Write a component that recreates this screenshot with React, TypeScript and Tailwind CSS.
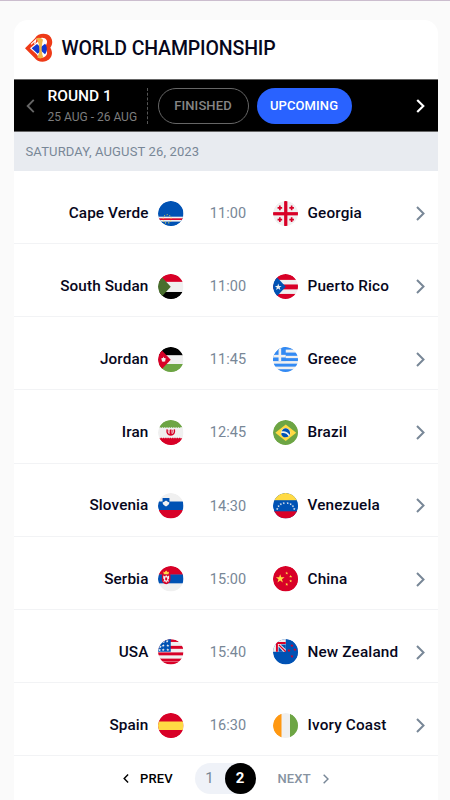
import type { ReactNode } from "react";

type Match = { home: string; away: string; time: string };

const MATCHES: Match[] = [
  { home: "Cape Verde", away: "Georgia", time: "11:00" },
  { home: "South Sudan", away: "Puerto Rico", time: "11:00" },
  { home: "Jordan", away: "Greece", time: "11:45" },
  { home: "Iran", away: "Brazil", time: "12:45" },
  { home: "Slovenia", away: "Venezuela", time: "14:30" },
  { home: "Serbia", away: "China", time: "15:00" },
  { home: "USA", away: "New Zealand", time: "15:40" },
  { home: "Spain", away: "Ivory Coast", time: "16:30" },
];

const RED = "#d80027";
const BLUE = "#0052b4";
const GREEN = "#6da544";
const WHITE = "#f0f0f0";
const YELLOW = "#ffda44";

const Rect = ({ x = 0, y = 0, w = 78, h = 78, c }: { x?: number; y?: number; w?: number; h?: number; c: string }) => (
  <rect x={x} y={y} width={w} height={h} fill={c} />
);

function starPoints(cx: number, cy: number, r: number) {
  return Array.from({ length: 10 }, (_, i) => {
    const a = (Math.PI / 5) * i - Math.PI / 2;
    const d = i % 2 ? r * 0.4 : r;
    return `${(cx + d * Math.cos(a)).toFixed(2)},${(cy + d * Math.sin(a)).toFixed(2)}`;
  }).join(" ");
}

const Star = ({ x, y, r, c }: { x: number; y: number; r: number; c: string }) => <polygon points={starPoints(x, y, r)} fill={c} />;

// 78x78 canvas, clipped to a circle by Flag
const FLAGS: Record<string, ReactNode> = {
  "Cape Verde": (
    <>
      <Rect c={BLUE} />
      <Rect y={48} h={15} c={WHITE} />
      <Rect y={53} h={5} c={RED} />
      {[[28, 42], [20, 45], [36, 45], [16, 52], [40, 52], [17, 61], [39, 61], [23, 67], [33, 67]].map(([x, y]) => (
        <Star key={`${x}-${y}`} x={x} y={y} r={3} c={YELLOW} />
      ))}
    </>
  ),
  Georgia: (
    <>
      <Rect c={WHITE} />
      <Rect x={34} w={10} c={RED} />
      <Rect y={34} h={10} c={RED} />
      {[[21, 21], [57, 21], [21, 57], [57, 57]].map(([x, y]) => (
        <path key={`${x}-${y}`} d={`M${x - 7} ${y}h14M${x} ${y - 7}v14`} stroke={RED} strokeWidth={5} />
      ))}
    </>
  ),
  "South Sudan": (
    <>
      <Rect c={WHITE} />
      <Rect h={24} c={RED} />
      <Rect y={55} h={23} c="#000" />
      <path d="M0 0L13 11L39 39L13 67L0 78Z" fill="#496e2d" />
    </>
  ),
  "Puerto Rico": (
    <>
      <Rect c={WHITE} />
      <Rect h={18} c={RED} />
      <Rect y={32} h={15} c={RED} />
      <Rect y={61} h={17} c={RED} />
      <path d="M0 0L10 8L39 39L10 70L0 78Z" fill={BLUE} />
      <Star x={16} y={40} r={11} c={WHITE} />
    </>
  ),
  Jordan: (
    <>
      <Rect c={WHITE} />
      <Rect h={25} c="#000" />
      <Rect y={52} h={26} c={GREEN} />
      <path d="M0 0L12 11L39 39L12 67L0 78Z" fill={RED} />
      <Star x={17} y={38} r={9} c={WHITE} />
      <circle cx={17} cy={39} r={6} fill={WHITE} />
    </>
  ),
  Greece: (
    <>
      <Rect c={WHITE} />
      <Rect h={8} c="#338af3" />
      <Rect y={17} h={10} c="#338af3" />
      <Rect y={34} h={9} c="#338af3" />
      <Rect y={51} h={9} c="#338af3" />
      <Rect y={68} h={10} c="#338af3" />
      <Rect w={39} h={43} c="#338af3" />
      <Rect x={17} w={8} h={43} c={WHITE} />
      <Rect y={24} w={39} h={8} c={WHITE} />
    </>
  ),
  Iran: (
    <>
      <Rect c={WHITE} />
      <Rect h={22} c={GREEN} />
      <Rect y={56} h={22} c={RED} />
      <path d="M8 21H70" stroke={GREEN} strokeWidth={5} strokeDasharray="4 3" />
      <path d="M8 57H70" stroke={RED} strokeWidth={5} strokeDasharray="4 3" />
      <path d="M28 29C26 40 31 46 39 46C47 46 52 40 50 29M39 29V48" stroke={RED} strokeWidth={4.5} fill="none" />
      <path d="M34 30C33 36 35 40 37 43M44 30C45 36 43 40 41 43" stroke={RED} strokeWidth={2} fill="none" />
    </>
  ),
  Brazil: (
    <>
      <Rect c={GREEN} />
      <path d="M39 14L71 39L39 64L7 39Z" fill={YELLOW} />
      <circle cx={39} cy={39} r={14} fill={WHITE} />
      <path d="M27 35C36 33 47 38 51 46C55 37 49 25 39 25C33 25 28 30 27 35Z" fill={BLUE} />
      <path d="M25 41C34 38 43 42 48 50C38 57 25 51 25 41Z" fill={BLUE} />
    </>
  ),
  Slovenia: (
    <>
      <Rect c={WHITE} />
      <Rect y={26} h={27} c={BLUE} />
      <Rect y={52} h={26} c={RED} />
      <path d="M14 15H35V29C35 36 30 39 24.500 41C18 39 14 36 14 29Z" fill={BLUE} />
      <path d="M14 29L19 27L24.500 23L30 27L35 29C34 36 29 38 24.500 41C20 38 14 36 14 29Z" fill={WHITE} />
    </>
  ),
  Venezuela: (
    <>
      <Rect c={BLUE} />
      <Rect h={22} c={YELLOW} />
      <Rect y={56} h={22} c={RED} />
      {[[13, 49], [17, 40], [24, 34], [33, 31], [45, 31], [54, 34], [61, 40], [65, 49]].map(([x, y]) => (
        <Star key={x} x={x} y={y} r={4.2} c={WHITE} />
      ))}
    </>
  ),
  Serbia: (
    <>
      <Rect c={WHITE} />
      <Rect h={27} c={RED} />
      <Rect y={26} h={27} c={BLUE} />
      <path d="M12 25H38V43C38 51 31 54 25 56C18 54 12 51 12 43Z" fill={RED} />
      <path d="M16 29L22 32L25 27L28 32L34 29V38L31 42L34 48L28 47L25 52L22 47L16 48L19 42L16 38Z" fill={WHITE} />
      <path d="M22 35h6v7l-3 3l-3-3Z" fill={RED} />
      <path d="M16 17L20 19L25 14L30 19L34 17L32 25H18Z" fill={YELLOW} />
    </>
  ),
  China: (
    <>
      <Rect c={RED} />
      <Star x={22} y={39} r={14} c={YELLOW} />
      <Star x={42} y={22} r={5} c={YELLOW} />
      <Star x={54} y={32} r={5} c={YELLOW} />
      <Star x={54} y={46} r={5} c={YELLOW} />
      <Star x={42} y={56} r={5} c={YELLOW} />
    </>
  ),
  USA: (
    <>
      <Rect c={WHITE} />
      {[0, 20, 40, 59].map((y) => (
        <Rect key={y} y={y + 1} h={y ? 9 : 8} c={RED} />
      ))}
      <Rect y={70} h={8} c={RED} />
      <Rect w={39} h={39} c={BLUE} />
      {[[28, 7], [17, 9], [16, 20], [30, 20], [7, 24], [16, 33], [30, 33], [5, 34]].map(([x, y]) => (
        <Star key={`${x}-${y}`} x={x} y={y} r={5} c={WHITE} />
      ))}
    </>
  ),
  "New Zealand": (
    <>
      <Rect c={BLUE} />
      <Rect w={39} h={39} c={WHITE} />
      <path d="M0 12H39M12 0V39" stroke={RED} strokeWidth={6} />
      <path d="M18 18L39 39" stroke={RED} strokeWidth={4} />
      <path d="M23 17H39V31Z" fill={BLUE} />
      <path d="M17 23V39H31Z" fill={BLUE} />
      {[[58, 20], [49, 35], [67, 32], [58, 53]].map(([x, y]) => (
        <Star key={x + y} x={x} y={y} r={5.5} c={RED} />
      ))}
    </>
  ),
  Spain: (
    <>
      <Rect c={RED} />
      <Rect y={26} h={26} c={YELLOW} />
    </>
  ),
  "Ivory Coast": (
    <>
      <Rect c={WHITE} />
      <Rect w={26} c="#ff9811" />
      <Rect x={52} w={26} c={GREEN} />
    </>
  ),
};

function Flag({ name }: { name: string }) {
  return (
    <svg viewBox="0 0 78 78" className="block size-[25.5px] shrink-0 rounded-full" aria-label={name}>
      <defs>
        <clipPath id={`c-${name.replace(" ", "")}`}>
          <circle cx={39} cy={39} r={39} />
        </clipPath>
      </defs>
      <g clipPath={`url(#c-${name.replace(" ", "")})`}>{FLAGS[name]}</g>
    </svg>
  );
}

function Chevron({ left, className, weight = 2 }: { left?: boolean; className: string; weight?: number }) {
  return (
    <svg viewBox="0 0 9 15" className={className} fill="none" stroke="currentColor" strokeWidth={weight}>
      <path d={left ? "M8 1L1.500 7.500L8 14" : "M1 1L7.500 7.500L1 14"} />
    </svg>
  );
}

function Logo() {
  return (
    <svg viewBox="0 0 84 90" className="h-[30px] w-7 shrink-0">
      <path d="M0 46L30 16C36 3 54 0 66 4C83 11 86 31 76 44C86 60 80 79 64 84C50 90 35 84 29 75Z" fill="#ee3a17" />
      <path d="M15 46L38 26C38 16 50 12 59 16C69 21 69 34 56 44C71 54 68 66 58 72C49 77 40 73 35 64Z" fill="#fff" />
      <path d="M20 46L36 33L47 43L60 32C68 40 67 56 60 64L48 53L38 62Z" fill="#1238cf" />
      <path d="M34 16C41 12 49 14 54 20C51 32 50 41 50 49C50 60 53 67 55 73C50 78 41 77 37 73C41 65 44 57 43 49C43 38 40 27 34 16Z" fill="#f0b549" />
      <path d="M18 34L32 21L29 33" stroke="#fff" strokeWidth={3.5} fill="none" />
    </svg>
  );
}

function MatchRow({ m }: { m: Match }) {
  return (
    <div className="flex h-[73.15px] items-center border-b border-[#f2f3f5] pt-[12.5px] pr-[13px]">
      <div className="w-[135px] text-right text-[15.3px] font-medium tracking-[0.12px] text-[#07071c]">{m.home}</div>
      <div className="ml-[9.5px]"><Flag name={m.home} /></div>
      <div className="w-[89px] pt-px text-center text-[14.5px] tracking-[0.1px] text-[#788797]">{m.time}</div>
      <Flag name={m.away} />
      <div className="ml-[9.5px] flex-1 text-[15.3px] font-medium tracking-[0.16px] text-[#07071c]">{m.away}</div>
      <Chevron className="h-[15px] w-[9px] text-[#788797]" />
    </div>
  );
}

export default function App() {
  return (
    <div className="h-[800px] overflow-hidden border-t border-[#cbbdce] bg-[#fafafa] pt-[19px] font-[Roboto,sans-serif]">
      <div className="ml-[13.5px] h-[780px] w-[424px] rounded-t-[14px] bg-white">
        <div className="flex h-[59px] items-center pb-[3px] pl-[11px]">
          <Logo />
          <h1 className="ml-[9px] pt-px text-[19.5px] leading-6 font-medium tracking-[-0.14px] whitespace-nowrap text-[#07071c]">WORLD CHAMPIONSHIP</h1>
        </div>

        <div className="flex h-[53px] items-center border-y border-[#666] bg-black pr-[12.5px] pl-[12.5px]">
          <Chevron left className="h-[14px] w-[9px] text-[#666]" />
          <div className="ml-[12.5px] flex h-9 w-[100px] flex-col justify-between border-r border-dashed border-[#555] whitespace-nowrap">
            <div className="text-[15.5px] leading-[17px] font-medium text-white">ROUND 1</div>
            <div className="text-[12px] leading-[14px] text-[#7d7d7d]">25 AUG - 26 AUG</div>
          </div>
          <button className="ml-[10px] h-9 w-[91px] rounded-full border border-[#666] text-[13px] font-medium tracking-[0.1px] text-[#858585]">FINISHED</button>
          <button className="ml-2 h-9 w-[95px] rounded-full bg-[#2962ff] text-[13px] font-medium tracking-[0.1px] text-white">UPCOMING</button>
          <Chevron className="ml-auto h-[14px] w-[9px] text-white" weight={2.3} />
        </div>

        <div className="flex h-[39px] items-center bg-[#e8ebf0] pt-px pl-3 text-[13px] tracking-[0.14px] text-[#788797]">SATURDAY, AUGUST 26, 2023</div>

        {MATCHES.map((m) => (
          <MatchRow key={m.home} m={m} />
        ))}

        <div className="flex h-[45px] items-center pl-[109px] text-[13px] font-medium">
          <Chevron left className="h-[9px] w-[6px] text-black" weight={2.4} />
          <div className="ml-[11.5px] w-[54.5px] tracking-[0.15px] text-black">PREV</div>
          <div className="flex h-[31px] w-[61px] items-center rounded-full bg-[#eff2f8]">
            <div className="w-[30px] text-center text-[15px] font-normal text-[#788797]">1</div>
            <div className="flex size-[31px] items-center justify-center rounded-full bg-black text-[15px] font-bold text-white">2</div>
          </div>
          <div className="ml-[22px] w-[45px] tracking-[0.15px] text-[#8793a1]">NEXT</div>
          <Chevron className="h-[10px] w-[6px] text-[#788797]" weight={2.2} />
        </div>
      </div>
    </div>
  );
}
